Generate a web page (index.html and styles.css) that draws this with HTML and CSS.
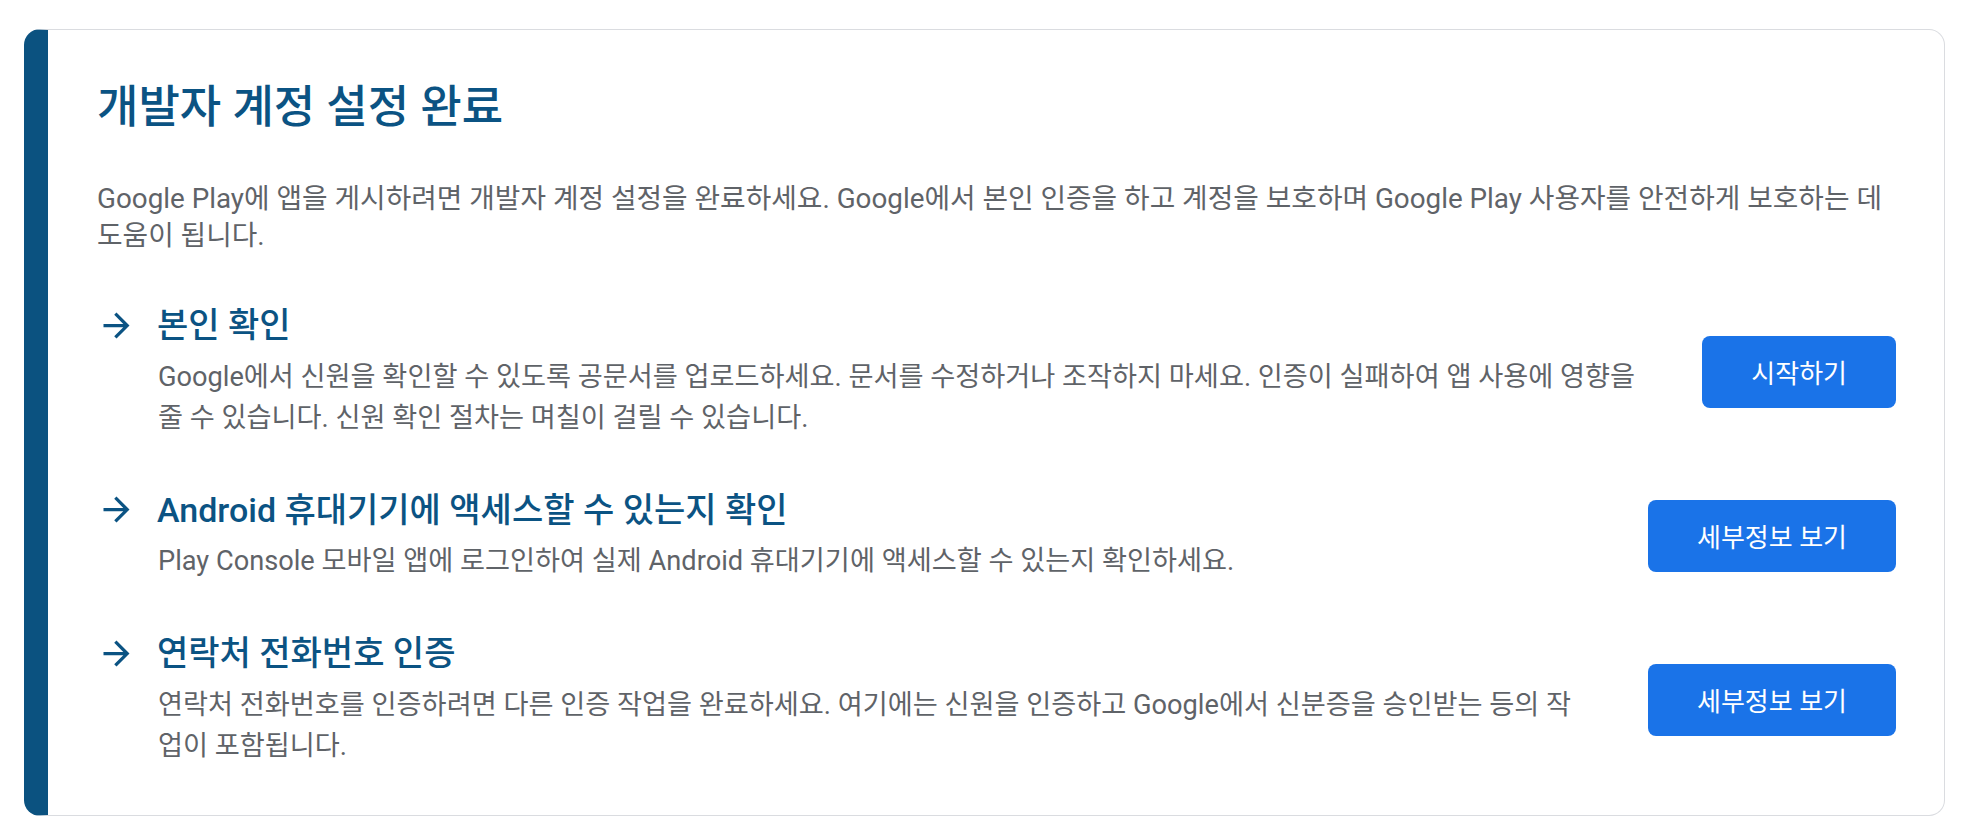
FILE: index.html
```html
<!DOCTYPE html>
<html lang="ko">
<head>
<meta charset="utf-8">
<title>개발자 계정 설정 완료</title>
<link rel="stylesheet" href="styles.css">
</head>
<body>
<section class="card">
  <h1 class="title">개발자 계정 설정 완료</h1>
  <p class="intro">Google Play에 앱을 게시하려면 개발자 계정 설정을 완료하세요. Google에서 본인 인증을 하고 계정을 보호하며 Google Play 사용자를 안전하게 보호하는 데 도움이 됩니다.</p>
  <div class="tasks">
    <div class="task">
      <div class="task-body">
        <div class="task-head">
          <svg class="arrow" viewBox="0 0 24 24" aria-hidden="true"><path d="M12 4l-1.41 1.41L16.17 11H4v2h12.17l-5.58 5.59L12 20l8-8z"/></svg>
          <h2 class="task-title">본인 확인</h2>
        </div>
        <p class="task-desc">Google에서 신원을 확인할 수 있도록 공문서를 업로드하세요. 문서를 수정하거나 조작하지 마세요. 인증이 실패하여 앱 사용에 영향을 줄 수 있습니다. 신원 확인 절차는 며칠이 걸릴 수 있습니다.</p>
      </div>
      <button class="btn">시작하기</button>
    </div>
    <div class="task">
      <div class="task-body">
        <div class="task-head">
          <svg class="arrow" viewBox="0 0 24 24" aria-hidden="true"><path d="M12 4l-1.41 1.41L16.17 11H4v2h12.17l-5.58 5.59L12 20l8-8z"/></svg>
          <h2 class="task-title">Android 휴대기기에 액세스할 수 있는지 확인</h2>
        </div>
        <p class="task-desc">Play Console 모바일 앱에 로그인하여 실제 Android 휴대기기에 액세스할 수 있는지 확인하세요.</p>
      </div>
      <button class="btn">세부정보 보기</button>
    </div>
    <div class="task">
      <div class="task-body">
        <div class="task-head">
          <svg class="arrow" viewBox="0 0 24 24" aria-hidden="true"><path d="M12 4l-1.41 1.41L16.17 11H4v2h12.17l-5.58 5.59L12 20l8-8z"/></svg>
          <h2 class="task-title">연락처 전화번호 인증</h2>
        </div>
        <p class="task-desc">연락처 전화번호를 인증하려면 다른 인증 작업을 완료하세요. 여기에는 신원을 인증하고 Google에서 신분증을 승인받는 등의 작업이 포함됩니다.</p>
      </div>
      <button class="btn">세부정보 보기</button>
    </div>
  </div>
</section>
</body>
</html>
```
FILE: styles.css
```css
* { box-sizing: border-box; }

body {
  margin: 0;
  background: #ffffff;
  font-family: Roboto, "Noto Sans CJK KR", "Noto Sans", sans-serif;
  color: #5f6368;
}

.card {
  margin: 29px 33px 0 24px;
  border: 1px solid #dadce0;
  border-left: 24px solid #0b5280;
  border-radius: 16px;
  background: #ffffff;
  padding: 54px 48px 48px 49px;
}

.title {
  margin: 0;
  font-size: 45px;
  line-height: 48px;
  font-weight: 500;
  color: #0b5383;
}

.intro {
  margin: 48px 0 0;
  padding-right: 10px;
  font-size: 27.8px;
  line-height: 37px;
  color: #5f6368;
}

.tasks {
  margin-top: 51px;
  display: flex;
  flex-direction: column;
  gap: 51px;
}

.task {
  display: flex;
  align-items: center;
  gap: 56px;
}

.task-body {
  flex: 1;
  min-width: 0;
}

.task-head {
  display: flex;
  align-items: center;
  gap: 21px;
  height: 40px;
}

.arrow {
  width: 39px;
  height: 39px;
  flex: none;
  fill: #0b5383;
}

.task-title {
  margin: 0;
  font-size: 34px;
  line-height: 40px;
  font-weight: 500;
  color: #0b5383;
  white-space: nowrap;
}

.task-desc {
  margin: 11.5px 0 0;
  padding-left: 61px;
  font-size: 27.2px;
  line-height: 41px;
  color: #5f6368;
}

.btn {
  flex: none;
  height: 72px;
  padding: 0 49px;
  border: none;
  border-radius: 8px;
  background: #1a73e8;
  color: #ffffff;
  font-family: Roboto, "Noto Sans CJK KR", "Noto Sans", sans-serif;
  font-size: 26px;
  font-weight: 400;
  cursor: pointer;
}
```
